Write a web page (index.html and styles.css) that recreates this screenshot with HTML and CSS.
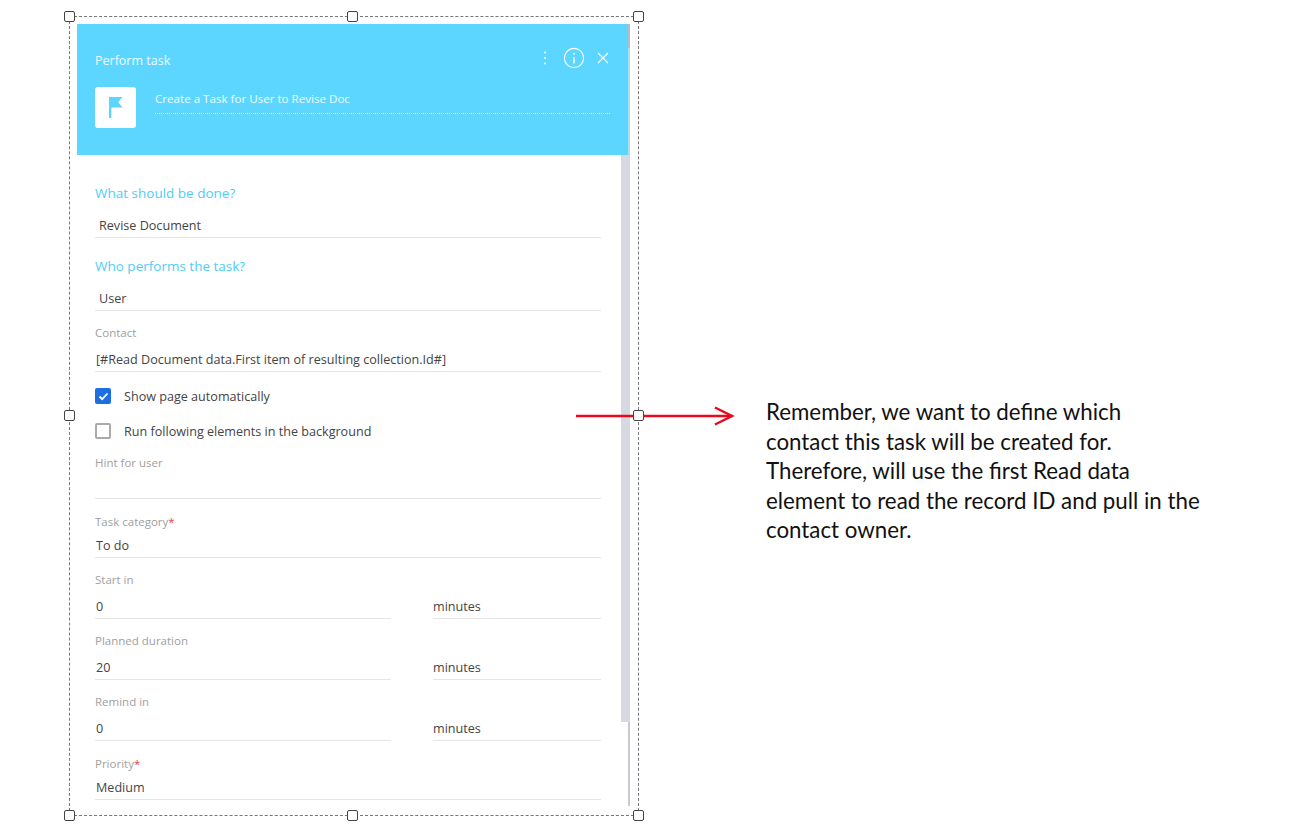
FILE: index.html
```html
<!DOCTYPE html>
<html lang="en">
<head>
    <meta charset="UTF-8">
    <title>Perform task</title>
    <link rel="stylesheet" href="styles.css">
</head>
<body>
    <div class="canvas">
        <div class="frame">
            <span class="handle h-tl"></span>
            <span class="handle h-tc"></span>
            <span class="handle h-tr"></span>
            <span class="handle h-ml"></span>
            <span class="handle h-bl"></span>
            <span class="handle h-bc"></span>
            <span class="handle h-br"></span>

            <div class="panel">
                <div class="panel-head">
                    <div class="head-top">
                        <span class="head-title">Perform task</span>
                        <div class="head-icons">
                            <svg class="icon-dots" width="4" height="14" viewBox="0 0 4 14"><circle cx="2" cy="1.5" r="1" fill="#fff"/><circle cx="2" cy="7" r="1" fill="#fff"/><circle cx="2" cy="12.5" r="1" fill="#fff"/></svg>
                            <svg class="icon-info" width="22" height="22" viewBox="0 0 22 22" fill="none" stroke="#fff"><circle cx="11" cy="11" r="9.6" stroke-width="1.1"/><path d="M11 10v6.5" stroke-width="1.4"/><circle cx="11" cy="6.8" r="1" fill="#fff" stroke="none"/></svg>
                            <svg class="icon-close" width="12" height="12" viewBox="0 0 12 12" fill="none" stroke="#fff" stroke-width="1.1"><path d="M1 1l10 10M11 1L1 11"/></svg>
                        </div>
                    </div>
                    <div class="head-row">
                        <div class="flag-box">
                            <svg width="14" height="21" viewBox="0 0 14 21"><path d="M0 0h13.5l-4.2 5.2 4.2 5.3H2.4V21H0z" fill="#5cd6ff"/></svg>
                        </div>
                        <div class="head-name">Create a Task for User to Revise Doc</div>
                    </div>
                </div>

                <div class="panel-body">
                    <h2 class="section-title first">What should be done?</h2>
                    <div class="value indent">Revise Document</div>

                    <h2 class="section-title">Who performs the task?</h2>
                    <div class="value indent">User</div>

                    <div class="field">
                        <label class="field-label">Contact</label>
                        <div class="value">[#Read Document data.First item of resulting collection.Id#]</div>
                    </div>

                    <div class="check-row check-first">
                        <span class="checkbox checked">
                            <svg width="11" height="9" viewBox="0 0 11 9" fill="none" stroke="#fff" stroke-width="1.8"><path d="M1.5 4.5l2.7 2.7L9.5 1.5"/></svg>
                        </span>
                        Show page automatically
                    </div>
                    <div class="check-row">
                        <span class="checkbox"></span>
                        Run following elements in the background
                    </div>

                    <div class="field">
                        <label class="field-label">Hint for user</label>
                        <div class="value tall"></div>
                    </div>

                    <div class="field required">
                        <label class="field-label">Task category<span class="star">*</span></label>
                        <div class="value">To do</div>
                    </div>

                    <div class="field">
                        <label class="field-label">Start in</label>
                        <div class="split">
                            <div class="value">0</div>
                            <div class="value">minutes</div>
                        </div>
                    </div>

                    <div class="field">
                        <label class="field-label">Planned duration</label>
                        <div class="split">
                            <div class="value">20</div>
                            <div class="value">minutes</div>
                        </div>
                    </div>

                    <div class="field">
                        <label class="field-label">Remind in</label>
                        <div class="split">
                            <div class="value">0</div>
                            <div class="value">minutes</div>
                        </div>
                    </div>

                    <div class="field required">
                        <label class="field-label">Priority<span class="star">*</span></label>
                        <div class="value">Medium</div>
                    </div>
                </div>

                <div class="scroll-track"></div>
                <div class="scroll-thumb"></div>
            </div>
        </div>

        <p class="note">Remember, we want to define which<br>contact this task will be created for.<br>Therefore, will use the first Read data<br>element to read the record ID and pull in the<br>contact owner.</p>

        <svg class="arrow" width="160" height="22" viewBox="0 0 160 22" fill="none" stroke="#e8091e" stroke-width="2.5">
            <path d="M0 11h155"/>
            <path d="M139 2.5l17 8.5-17 8.5"/>
        </svg>
        <span class="handle h-mr"></span>
    </div>
</body>
</html>
```

FILE: styles.css
```css
* {
    box-sizing: border-box;
}
html, body {
    margin: 0;
    height: 100%;
    background: #fff;
    overflow: hidden;
}
body {
    font-family: "Open Sans", Arial, sans-serif;
}
.canvas {
    position: relative;
    display: flex;
    align-items: flex-start;
    width: 1310px;
    height: 838px;
    padding: 16px 0 0 69px;
}
.frame {
    position: relative;
    flex: none;
    width: 570px;
    height: 800px;
    padding: 7px 0 0 7px;
    border: 1px dashed #777;
}
.handle {
    position: absolute;
    z-index: 5;
    width: 11px;
    height: 11px;
    background: #fff;
    border: 1.5px solid #444;
    border-radius: 2px;
}
.h-tl { left: -6px; top: -6px; }
.h-tc { left: 277px; top: -6px; }
.h-tr { right: -6px; top: -6px; }
.h-ml { left: -6px; top: 393px; }
.h-bl { left: -6px; bottom: -6px; }
.h-bc { left: 277px; bottom: -6px; }
.h-br { right: -6px; bottom: -6px; }
.h-mr { left: 633px; top: 410px; }

.panel {
    position: relative;
    width: 553px;
    height: 782px;
    overflow: hidden;
}
.panel-head {
    height: 131px;
    padding: 26px 20px 0 18px;
    background: #5cd6ff;
    color: #fff;
}
.head-top {
    display: flex;
    align-items: center;
    justify-content: space-between;
    height: 20px;
}
.head-title {
    font-size: 12.5px;
    color: #eefbff;
}
.head-icons {
    display: flex;
    align-items: center;
    margin: -4px 1px 0 0;
}
.icon-dots {
    margin-right: 16px;
}
.icon-info {
    margin-right: 12px;
}
.head-row {
    display: flex;
    margin-top: 17px;
}
.flag-box {
    display: flex;
    align-items: center;
    justify-content: center;
    flex: none;
    width: 41px;
    height: 41px;
    padding-left: 1px;
    background: #fff;
    border-radius: 3px;
}
.head-name {
    flex: 1;
    height: 27px;
    margin-left: 19px;
    font-size: 11.6px;
    line-height: 24px;
    color: #eefbff;
    border-bottom: 1px dotted #dff6ff;
}

.panel-body {
    padding: 28px 29px 0 18px;
}
.section-title {
    margin: 18px 0 10px;
    font-size: 13.5px;
    font-weight: 400;
    line-height: 20px;
    color: #4fcdf5;
}
.section-title.first {
    margin-top: 0;
}
.value {
    height: 25px;
    padding-left: 1px;
    font-size: 12.6px;
    line-height: 26px;
    color: #444;
    border-bottom: 1px solid #e6e6e6;
}
.value.indent {
    padding-left: 4px;
}
.value.tall {
    height: 22px;
}
.field {
    margin-top: 14px;
}
.field.required {
    margin-top: 15px;
}
.field.required .field-label {
    margin-bottom: 3px;
}
.field-label {
    display: block;
    margin-bottom: 6px;
    font-size: 11.5px;
    line-height: 16px;
    color: #a0a0a0;
}
.star {
    color: #e8404b;
}
.split {
    display: grid;
    grid-template-columns: 296px 168px;
    column-gap: 42px;
}
.split .value:last-child {
    padding-left: 0;
}
.check-row {
    display: flex;
    align-items: center;
    height: 20px;
    margin-top: 15px;
    font-size: 12.6px;
    color: #444;
}
.check-row.check-first {
    margin-top: 14px;
}
.checkbox {
    display: flex;
    align-items: center;
    justify-content: center;
    flex: none;
    width: 16px;
    height: 16px;
    margin-right: 13px;
    border: 2px solid #aaa;
    border-radius: 2px;
}
.checkbox.checked {
    background: #1b6fe0;
    border-color: #1b6fe0;
}
.scroll-track {
    position: absolute;
    top: 0;
    right: 0;
    bottom: 0;
    width: 2px;
    background: linear-gradient(#b7bcc4 0, #b7bcc4 24px, #a9dff2 24px, #a9dff2 131px, #c9c9d2 131px);
}
.scroll-thumb {
    position: absolute;
    top: 131px;
    right: 0;
    width: 9px;
    height: 567px;
    background: #d8d8e0;
}

.note {
    flex: none;
    width: 460px;
    margin: 381px 0 0 127px;
    font-family: Lato, Arial, sans-serif;
    font-size: 22.3px;
    line-height: 29.5px;
    color: #111;
}
.arrow {
    position: absolute;
    left: 576px;
    top: 405px;
    z-index: 4;
}
```
